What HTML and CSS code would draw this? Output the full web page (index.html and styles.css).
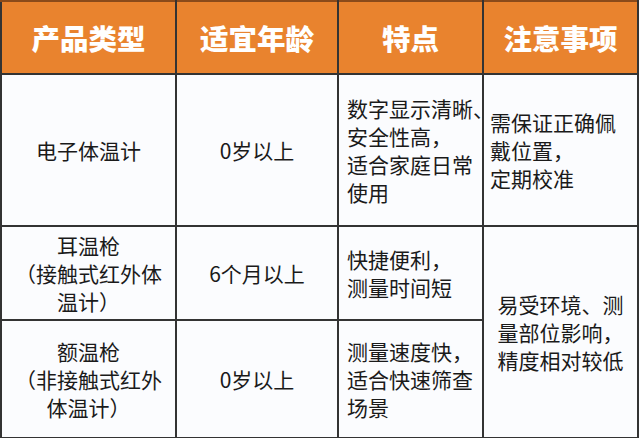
FILE: index.html
```html
<!DOCTYPE html>
<html lang="zh">
<head>
<meta charset="utf-8">
<link rel="stylesheet" href="styles.css">
</head>
<body>
<table class="tbl">
  <colgroup>
    <col class="c1"><col class="c2"><col class="c3"><col class="c4">
  </colgroup>
  <thead>
    <tr class="head">
      <th>产品类型</th>
      <th>适宜年龄</th>
      <th>特点</th>
      <th>注意事项</th>
    </tr>
  </thead>
  <tbody>
    <tr class="r1">
      <td class="center">电子体温计</td>
      <td class="center">0岁以上</td>
      <td class="left">数字显示清晰、<br>安全性高，<br>适合家庭日常<br>使用</td>
      <td class="left note1">需保证正确佩<br>戴位置，<br>定期校准</td>
    </tr>
    <tr class="r2">
      <td class="center">耳温枪<br>（接触式红外体<br>温计）</td>
      <td class="center">6个月以上</td>
      <td class="left">快捷便利，<br>测量时间短</td>
      <td class="center note2" rowspan="2">易受环境、测<br>量部位影响，<br>精度相对较低</td>
    </tr>
    <tr class="r3">
      <td class="center">额温枪<br>（非接触式红外<br>体温计）</td>
      <td class="center">0岁以上</td>
      <td class="left">测量速度快，<br>适合快速筛查<br>场景</td>
    </tr>
  </tbody>
</table>
</body>
</html>
```

FILE: styles.css
```css
html, body {
  margin: 0;
  padding: 0;
  background: #fbfcfe;
}
body {
  width: 640px;
  height: 438px;
  overflow: hidden;
  font-family: "Noto Sans CJK SC", "Noto Sans", sans-serif;
  color: #1a1a1a;
}
.tbl {
  border-collapse: collapse;
  table-layout: fixed;
  width: 637px;
}
.c1 { width: 175px; }
.c2 { width: 162px; }
.c3 { width: 145px; }
.c4 { width: 155px; }

.tbl th, .tbl td {
  border: 2px solid #333;
  padding: 0;
  vertical-align: middle;
  white-space: nowrap;
}
.head th {
  height: 71px;
  background: #e9832e;
  color: #fff;
  font-size: 28.5px;
  font-weight: 800;
  text-align: center;
  border-top-color: #8a4a1a;
}
.tbl td {
  font-size: 21px;
  line-height: 28px;
  background: #fbfcfe;
}
.r1 td { height: 150px; }
.r2 td { height: 92px; }
.r3 td { height: 116px; }

.center { text-align: center; }
.left { text-align: left; padding-left: 8px !important; }
.note1 { padding-left: 6px !important; }
.note2 { padding-left: 0 !important; }
```
